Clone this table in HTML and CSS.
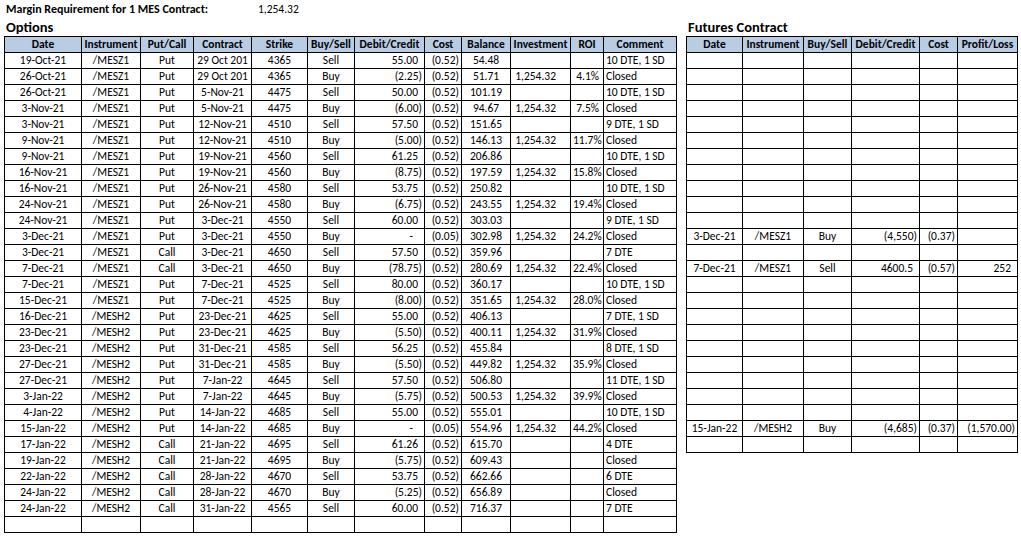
FILE: index.html
```html
<!DOCTYPE html>
<html>
<head>
<meta charset="utf-8">
<title>Options and Futures log</title>
<link rel="stylesheet" href="styles.css">
</head>
<body>
<div class="top"><span class="label">Margin Requirement for 1 MES Contract:</span><span class="value">1,254.32</span></div>
<div class="sheets">
  <section class="section options">
    <h2>Options</h2>
    <div class="grid">
      <div class="row hdr"><div class="c">Date</div><div class="c">Instrument</div><div class="c">Put/Call</div><div class="c">Contract</div><div class="c">Strike</div><div class="c">Buy/Sell</div><div class="c">Debit/Credit</div><div class="c">Cost</div><div class="c">Balance</div><div class="c">Investment</div><div class="c">ROI</div><div class="c">Comment</div></div>
      <div class="row"><div class="c">19-Oct-21</div><div class="c">/MESZ1</div><div class="c">Put</div><div class="c">29 Oct 201</div><div class="c">4365</div><div class="c">Sell</div><div class="c p">55.00</div><div class="c">(0.52)</div><div class="c">54.48</div><div class="c"></div><div class="c"></div><div class="c">10 DTE, 1 SD</div></div>
      <div class="row"><div class="c">26-Oct-21</div><div class="c">/MESZ1</div><div class="c">Put</div><div class="c">29 Oct 201</div><div class="c">4365</div><div class="c">Buy</div><div class="c">(2.25)</div><div class="c">(0.52)</div><div class="c">51.71</div><div class="c">1,254.32</div><div class="c">4.1%</div><div class="c">Closed</div></div>
      <div class="row"><div class="c">26-Oct-21</div><div class="c">/MESZ1</div><div class="c">Put</div><div class="c">5-Nov-21</div><div class="c">4475</div><div class="c">Sell</div><div class="c p">50.00</div><div class="c">(0.52)</div><div class="c">101.19</div><div class="c"></div><div class="c"></div><div class="c">10 DTE, 1 SD</div></div>
      <div class="row"><div class="c">3-Nov-21</div><div class="c">/MESZ1</div><div class="c">Put</div><div class="c">5-Nov-21</div><div class="c">4475</div><div class="c">Buy</div><div class="c">(6.00)</div><div class="c">(0.52)</div><div class="c">94.67</div><div class="c">1,254.32</div><div class="c">7.5%</div><div class="c">Closed</div></div>
      <div class="row"><div class="c">3-Nov-21</div><div class="c">/MESZ1</div><div class="c">Put</div><div class="c">12-Nov-21</div><div class="c">4510</div><div class="c">Sell</div><div class="c p">57.50</div><div class="c">(0.52)</div><div class="c">151.65</div><div class="c"></div><div class="c"></div><div class="c">9 DTE, 1 SD</div></div>
      <div class="row"><div class="c">9-Nov-21</div><div class="c">/MESZ1</div><div class="c">Put</div><div class="c">12-Nov-21</div><div class="c">4510</div><div class="c">Buy</div><div class="c">(5.00)</div><div class="c">(0.52)</div><div class="c">146.13</div><div class="c">1,254.32</div><div class="c">11.7%</div><div class="c">Closed</div></div>
      <div class="row"><div class="c">9-Nov-21</div><div class="c">/MESZ1</div><div class="c">Put</div><div class="c">19-Nov-21</div><div class="c">4560</div><div class="c">Sell</div><div class="c p">61.25</div><div class="c">(0.52)</div><div class="c">206.86</div><div class="c"></div><div class="c"></div><div class="c">10 DTE, 1 SD</div></div>
      <div class="row"><div class="c">16-Nov-21</div><div class="c">/MESZ1</div><div class="c">Put</div><div class="c">19-Nov-21</div><div class="c">4560</div><div class="c">Buy</div><div class="c">(8.75)</div><div class="c">(0.52)</div><div class="c">197.59</div><div class="c">1,254.32</div><div class="c">15.8%</div><div class="c">Closed</div></div>
      <div class="row"><div class="c">16-Nov-21</div><div class="c">/MESZ1</div><div class="c">Put</div><div class="c">26-Nov-21</div><div class="c">4580</div><div class="c">Sell</div><div class="c p">53.75</div><div class="c">(0.52)</div><div class="c">250.82</div><div class="c"></div><div class="c"></div><div class="c">10 DTE, 1 SD</div></div>
      <div class="row"><div class="c">24-Nov-21</div><div class="c">/MESZ1</div><div class="c">Put</div><div class="c">26-Nov-21</div><div class="c">4580</div><div class="c">Buy</div><div class="c">(6.75)</div><div class="c">(0.52)</div><div class="c">243.55</div><div class="c">1,254.32</div><div class="c">19.4%</div><div class="c">Closed</div></div>
      <div class="row"><div class="c">24-Nov-21</div><div class="c">/MESZ1</div><div class="c">Put</div><div class="c">3-Dec-21</div><div class="c">4550</div><div class="c">Sell</div><div class="c p">60.00</div><div class="c">(0.52)</div><div class="c">303.03</div><div class="c"></div><div class="c"></div><div class="c">9 DTE, 1 SD</div></div>
      <div class="row"><div class="c">3-Dec-21</div><div class="c">/MESZ1</div><div class="c">Put</div><div class="c">3-Dec-21</div><div class="c">4550</div><div class="c">Buy</div><div class="c z">-</div><div class="c">(0.05)</div><div class="c">302.98</div><div class="c">1,254.32</div><div class="c">24.2%</div><div class="c">Closed</div></div>
      <div class="row"><div class="c">3-Dec-21</div><div class="c">/MESZ1</div><div class="c">Call</div><div class="c">3-Dec-21</div><div class="c">4650</div><div class="c">Sell</div><div class="c p">57.50</div><div class="c">(0.52)</div><div class="c">359.96</div><div class="c"></div><div class="c"></div><div class="c">7 DTE</div></div>
      <div class="row"><div class="c">7-Dec-21</div><div class="c">/MESZ1</div><div class="c">Call</div><div class="c">3-Dec-21</div><div class="c">4650</div><div class="c">Buy</div><div class="c">(78.75)</div><div class="c">(0.52)</div><div class="c">280.69</div><div class="c">1,254.32</div><div class="c">22.4%</div><div class="c">Closed</div></div>
      <div class="row"><div class="c">7-Dec-21</div><div class="c">/MESZ1</div><div class="c">Put</div><div class="c">7-Dec-21</div><div class="c">4525</div><div class="c">Sell</div><div class="c p">80.00</div><div class="c">(0.52)</div><div class="c">360.17</div><div class="c"></div><div class="c"></div><div class="c">10 DTE, 1 SD</div></div>
      <div class="row"><div class="c">15-Dec-21</div><div class="c">/MESZ1</div><div class="c">Put</div><div class="c">7-Dec-21</div><div class="c">4525</div><div class="c">Buy</div><div class="c">(8.00)</div><div class="c">(0.52)</div><div class="c">351.65</div><div class="c">1,254.32</div><div class="c">28.0%</div><div class="c">Closed</div></div>
      <div class="row"><div class="c">16-Dec-21</div><div class="c">/MESH2</div><div class="c">Put</div><div class="c">23-Dec-21</div><div class="c">4625</div><div class="c">Sell</div><div class="c p">55.00</div><div class="c">(0.52)</div><div class="c">406.13</div><div class="c"></div><div class="c"></div><div class="c">7 DTE, 1 SD</div></div>
      <div class="row"><div class="c">23-Dec-21</div><div class="c">/MESH2</div><div class="c">Put</div><div class="c">23-Dec-21</div><div class="c">4625</div><div class="c">Buy</div><div class="c">(5.50)</div><div class="c">(0.52)</div><div class="c">400.11</div><div class="c">1,254.32</div><div class="c">31.9%</div><div class="c">Closed</div></div>
      <div class="row"><div class="c">23-Dec-21</div><div class="c">/MESH2</div><div class="c">Put</div><div class="c">31-Dec-21</div><div class="c">4585</div><div class="c">Sell</div><div class="c p">56.25</div><div class="c">(0.52)</div><div class="c">455.84</div><div class="c"></div><div class="c"></div><div class="c">8 DTE, 1 SD</div></div>
      <div class="row"><div class="c">27-Dec-21</div><div class="c">/MESH2</div><div class="c">Put</div><div class="c">31-Dec-21</div><div class="c">4585</div><div class="c">Buy</div><div class="c">(5.50)</div><div class="c">(0.52)</div><div class="c">449.82</div><div class="c">1,254.32</div><div class="c">35.9%</div><div class="c">Closed</div></div>
      <div class="row"><div class="c">27-Dec-21</div><div class="c">/MESH2</div><div class="c">Put</div><div class="c">7-Jan-22</div><div class="c">4645</div><div class="c">Sell</div><div class="c p">57.50</div><div class="c">(0.52)</div><div class="c">506.80</div><div class="c"></div><div class="c"></div><div class="c">11 DTE, 1 SD</div></div>
      <div class="row"><div class="c">3-Jan-22</div><div class="c">/MESH2</div><div class="c">Put</div><div class="c">7-Jan-22</div><div class="c">4645</div><div class="c">Buy</div><div class="c">(5.75)</div><div class="c">(0.52)</div><div class="c">500.53</div><div class="c">1,254.32</div><div class="c">39.9%</div><div class="c">Closed</div></div>
      <div class="row"><div class="c">4-Jan-22</div><div class="c">/MESH2</div><div class="c">Put</div><div class="c">14-Jan-22</div><div class="c">4685</div><div class="c">Sell</div><div class="c p">55.00</div><div class="c">(0.52)</div><div class="c">555.01</div><div class="c"></div><div class="c"></div><div class="c">10 DTE, 1 SD</div></div>
      <div class="row"><div class="c">15-Jan-22</div><div class="c">/MESH2</div><div class="c">Put</div><div class="c">14-Jan-22</div><div class="c">4685</div><div class="c">Buy</div><div class="c z">-</div><div class="c">(0.05)</div><div class="c">554.96</div><div class="c">1,254.32</div><div class="c">44.2%</div><div class="c">Closed</div></div>
      <div class="row"><div class="c">17-Jan-22</div><div class="c">/MESH2</div><div class="c">Call</div><div class="c">21-Jan-22</div><div class="c">4695</div><div class="c">Sell</div><div class="c p">61.26</div><div class="c">(0.52)</div><div class="c">615.70</div><div class="c"></div><div class="c"></div><div class="c">4 DTE</div></div>
      <div class="row"><div class="c">19-Jan-22</div><div class="c">/MESH2</div><div class="c">Call</div><div class="c">21-Jan-22</div><div class="c">4695</div><div class="c">Buy</div><div class="c">(5.75)</div><div class="c">(0.52)</div><div class="c">609.43</div><div class="c"></div><div class="c"></div><div class="c">Closed</div></div>
      <div class="row"><div class="c">22-Jan-22</div><div class="c">/MESH2</div><div class="c">Call</div><div class="c">28-Jan-22</div><div class="c">4670</div><div class="c">Sell</div><div class="c p">53.75</div><div class="c">(0.52)</div><div class="c">662.66</div><div class="c"></div><div class="c"></div><div class="c">6 DTE</div></div>
      <div class="row"><div class="c">24-Jan-22</div><div class="c">/MESH2</div><div class="c">Call</div><div class="c">28-Jan-22</div><div class="c">4670</div><div class="c">Buy</div><div class="c">(5.25)</div><div class="c">(0.52)</div><div class="c">656.89</div><div class="c"></div><div class="c"></div><div class="c">Closed</div></div>
      <div class="row"><div class="c">24-Jan-22</div><div class="c">/MESH2</div><div class="c">Call</div><div class="c">31-Jan-22</div><div class="c">4565</div><div class="c">Sell</div><div class="c p">60.00</div><div class="c">(0.52)</div><div class="c">716.37</div><div class="c"></div><div class="c"></div><div class="c">7 DTE</div></div>
      <div class="row"><div class="c"></div><div class="c"></div><div class="c"></div><div class="c"></div><div class="c"></div><div class="c"></div><div class="c"></div><div class="c"></div><div class="c"></div><div class="c"></div><div class="c"></div><div class="c"></div></div>
    </div>
  </section>
  <section class="section futures">
    <h2>Futures Contract</h2>
    <div class="grid">
      <div class="row hdr"><div class="c">Date</div><div class="c">Instrument</div><div class="c">Buy/Sell</div><div class="c">Debit/Credit</div><div class="c">Cost</div><div class="c">Profit/Loss</div></div>
      <div class="row"><div class="c"></div><div class="c"></div><div class="c"></div><div class="c"></div><div class="c"></div><div class="c"></div></div>
      <div class="row"><div class="c"></div><div class="c"></div><div class="c"></div><div class="c"></div><div class="c"></div><div class="c"></div></div>
      <div class="row"><div class="c"></div><div class="c"></div><div class="c"></div><div class="c"></div><div class="c"></div><div class="c"></div></div>
      <div class="row"><div class="c"></div><div class="c"></div><div class="c"></div><div class="c"></div><div class="c"></div><div class="c"></div></div>
      <div class="row"><div class="c"></div><div class="c"></div><div class="c"></div><div class="c"></div><div class="c"></div><div class="c"></div></div>
      <div class="row"><div class="c"></div><div class="c"></div><div class="c"></div><div class="c"></div><div class="c"></div><div class="c"></div></div>
      <div class="row"><div class="c"></div><div class="c"></div><div class="c"></div><div class="c"></div><div class="c"></div><div class="c"></div></div>
      <div class="row"><div class="c"></div><div class="c"></div><div class="c"></div><div class="c"></div><div class="c"></div><div class="c"></div></div>
      <div class="row"><div class="c"></div><div class="c"></div><div class="c"></div><div class="c"></div><div class="c"></div><div class="c"></div></div>
      <div class="row"><div class="c"></div><div class="c"></div><div class="c"></div><div class="c"></div><div class="c"></div><div class="c"></div></div>
      <div class="row"><div class="c"></div><div class="c"></div><div class="c"></div><div class="c"></div><div class="c"></div><div class="c"></div></div>
      <div class="row"><div class="c">3-Dec-21</div><div class="c">/MESZ1</div><div class="c">Buy</div><div class="c">(4,550)</div><div class="c">(0.37)</div><div class="c"></div></div>
      <div class="row"><div class="c"></div><div class="c"></div><div class="c"></div><div class="c"></div><div class="c"></div><div class="c"></div></div>
      <div class="row"><div class="c">7-Dec-21</div><div class="c">/MESZ1</div><div class="c">Sell</div><div class="c p">4600.5</div><div class="c">(0.57)</div><div class="c p">252</div></div>
      <div class="row"><div class="c"></div><div class="c"></div><div class="c"></div><div class="c"></div><div class="c"></div><div class="c"></div></div>
      <div class="row"><div class="c"></div><div class="c"></div><div class="c"></div><div class="c"></div><div class="c"></div><div class="c"></div></div>
      <div class="row"><div class="c"></div><div class="c"></div><div class="c"></div><div class="c"></div><div class="c"></div><div class="c"></div></div>
      <div class="row"><div class="c"></div><div class="c"></div><div class="c"></div><div class="c"></div><div class="c"></div><div class="c"></div></div>
      <div class="row"><div class="c"></div><div class="c"></div><div class="c"></div><div class="c"></div><div class="c"></div><div class="c"></div></div>
      <div class="row"><div class="c"></div><div class="c"></div><div class="c"></div><div class="c"></div><div class="c"></div><div class="c"></div></div>
      <div class="row"><div class="c"></div><div class="c"></div><div class="c"></div><div class="c"></div><div class="c"></div><div class="c"></div></div>
      <div class="row"><div class="c"></div><div class="c"></div><div class="c"></div><div class="c"></div><div class="c"></div><div class="c"></div></div>
      <div class="row"><div class="c"></div><div class="c"></div><div class="c"></div><div class="c"></div><div class="c"></div><div class="c"></div></div>
      <div class="row"><div class="c">15-Jan-22</div><div class="c">/MESH2</div><div class="c">Buy</div><div class="c">(4,685)</div><div class="c">(0.37)</div><div class="c">(1,570.00)</div></div>
      <div class="row"><div class="c"></div><div class="c"></div><div class="c"></div><div class="c"></div><div class="c"></div><div class="c"></div></div>
    </div>
  </section>
</div>
</body>
</html>
```

FILE: styles.css
```css
body {
  margin: 0;
  background: #ffffff;
  color: #000000;
  font-family: Carlito, Lato, "Liberation Sans", sans-serif;
  font-size: 11.5px;
}

.top {
  height: 18px;
  display: flex;
  align-items: center;
  padding-left: 6px;
}

.top .label {
  font-weight: 700;
  font-size: 12px;
  width: 252px;
}

.sheets {
  display: flex;
  align-items: flex-start;
  gap: 9px;
  padding-left: 4px;
}

.section h2 {
  margin: 0;
  height: 18px;
  line-height: 18px;
  font-size: 14.5px;
  font-weight: 700;
  padding-left: 2px;
}

.grid {
  border-left: 1px solid #000;
  border-top: 1px solid #000;
}

.row {
  display: grid;
}

.options .row {
  grid-template-columns: 77px 59px 53px 58px 56px 47px 70px 37px 49px 60px 33px 73px;
}

.futures .row {
  grid-template-columns: 56px 61px 48px 68px 38px 60px;
}

.c {
  box-sizing: border-box;
  height: 16px;
  line-height: 15px;
  border-right: 1px solid #000;
  border-bottom: 1px solid #000;
  white-space: nowrap;
  overflow: hidden;
  padding: 0 2px;
  text-align: center;
}

.hdr .c {
  background: #b8cce4;
  font-weight: 700;
  padding: 0;
}

/* options column alignment */
.options .row:not(.hdr) .c:nth-child(7),
.options .row:not(.hdr) .c:nth-child(8) {
  text-align: right;
}

.options .row:not(.hdr) .c:nth-child(10) {
  text-align: right;
  padding-right: 14px;
}

.options .row:not(.hdr) .c:nth-child(11) {
  text-align: right;
  padding-right: 4px;
}

.options .row:not(.hdr) .c:nth-child(12) {
  text-align: left;
}

/* futures column alignment */
.futures .row:not(.hdr) .c:nth-child(4),
.futures .row:not(.hdr) .c:nth-child(5),
.futures .row:not(.hdr) .c:nth-child(6) {
  text-align: right;
}

.row .c.p {
  padding-right: 6px;
}

.row .c.z {
  padding-right: 11px;
}
```
